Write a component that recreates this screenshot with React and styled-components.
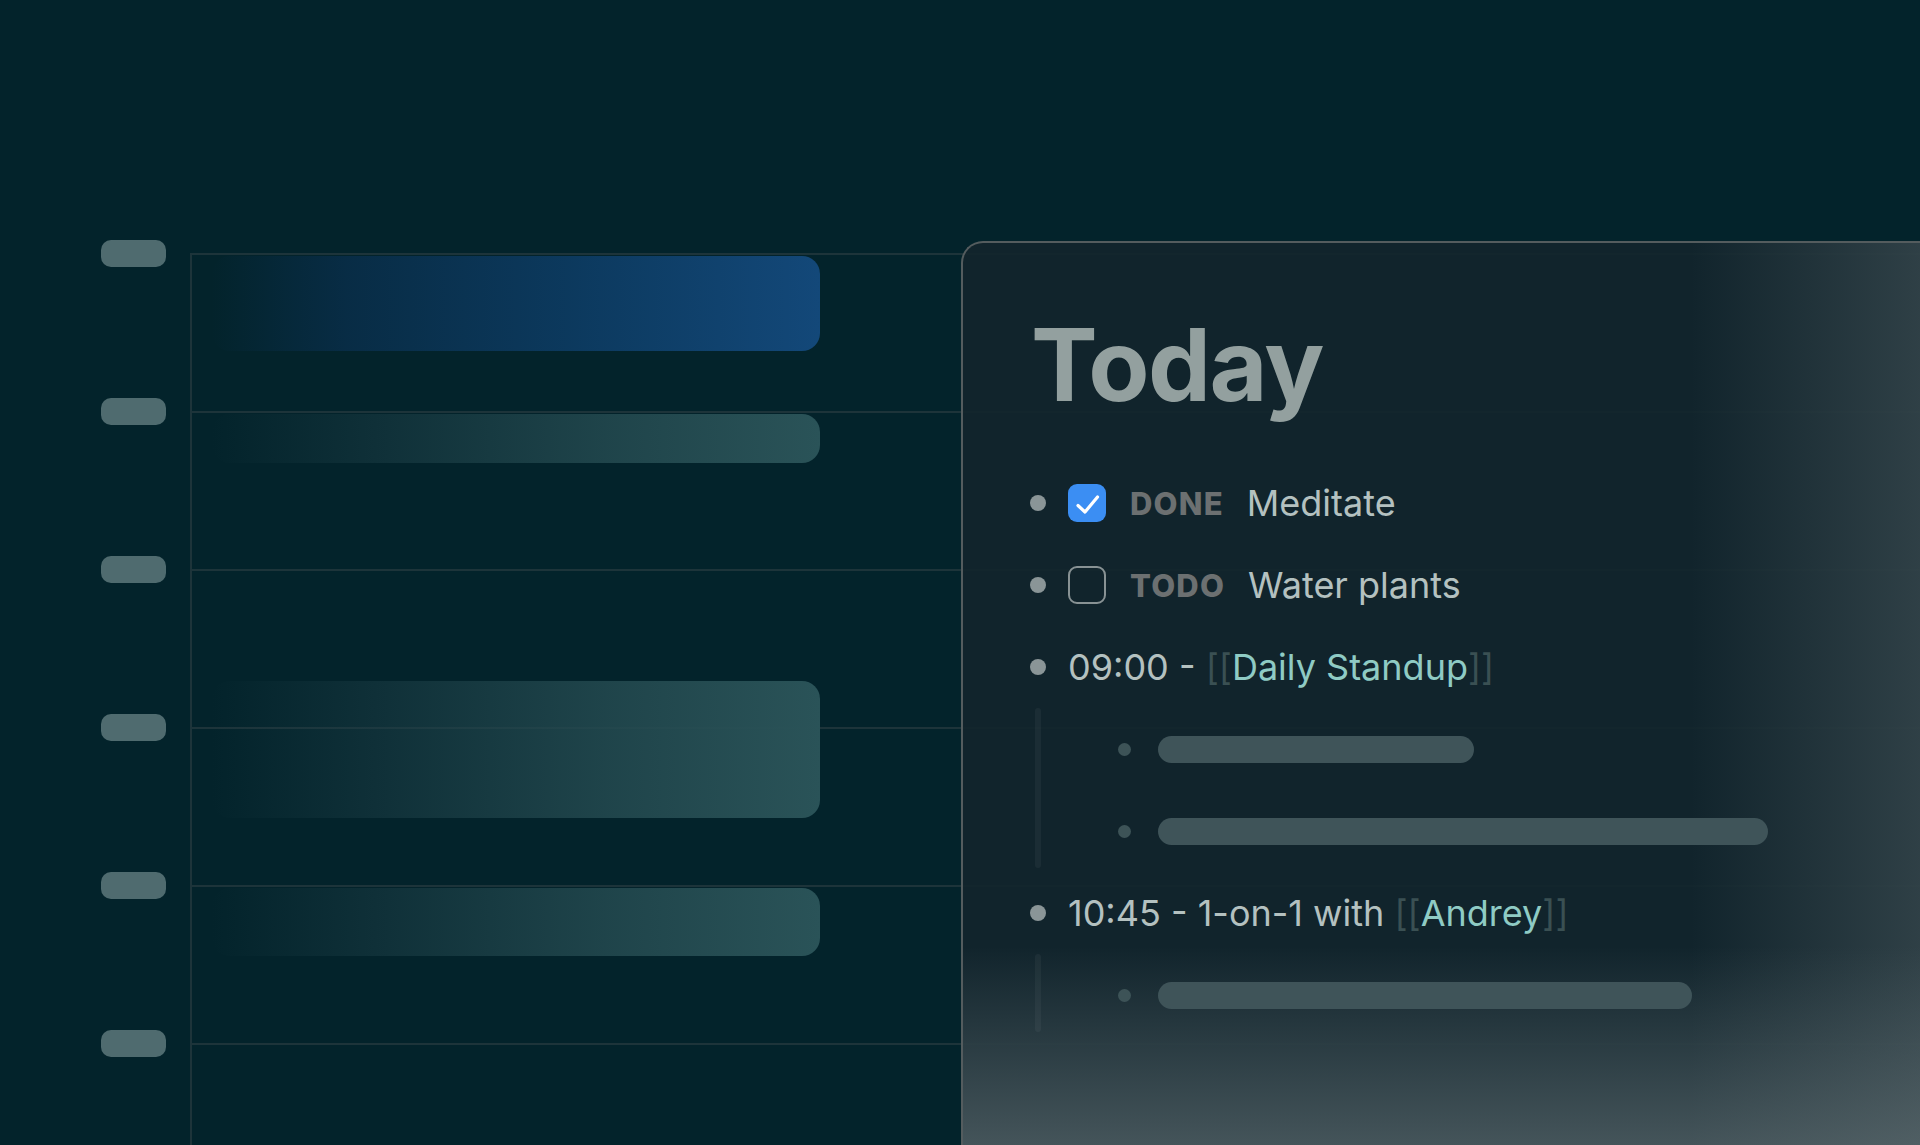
import React from 'react'
import styled, { createGlobalStyle } from 'styled-components'

const GlobalStyle = createGlobalStyle`
  html, body {
    margin: 0;
    padding: 0;
    background: #03232b;
    overflow: hidden;
  }
  body {
    font-family: Inter, "Noto Sans", "Liberation Sans", sans-serif;
  }
`

const Stage = styled.div`
  display: grid;
  width: 1920px;
  height: 1145px;
  overflow: hidden;
  background: #03232b;
`

/* ---------- left timeline ---------- */

const Timeline = styled.div`
  grid-area: 1 / 1;
  display: grid;
  grid-template-columns: 190px 1fr;
  grid-template-rows: repeat(5, 158px) 1fr;
  padding-top: 253px;
`

const Slot = styled.div`
  grid-column: 2;
  grid-row: ${p => p.row};
  border-top: 2px solid #1d343a;
  border-left: 2px solid #1d343a;
`

const Pill = styled.div`
  grid-column: 1;
  grid-row: ${p => p.row};
  align-self: start;
  justify-self: start;
  margin-left: 101px;
  margin-top: -13px;
  width: 65px;
  height: 27px;
  border-radius: 10px;
  background: #4f6b6f;
`

const EventBar = styled.div`
  grid-column: 2;
  grid-row: ${p => p.rows};
  align-self: start;
  margin-left: 22px;
  margin-top: ${p => p.offset}px;
  width: 608px;
  height: ${p => p.h}px;
  border-radius: 18px;
  background: ${p => p.blue
    ? 'linear-gradient(90deg, rgba(18,70,120,0) 0%, rgba(10,48,80,0.7) 22%, rgba(13,60,100,0.9) 60%, #134879 100%)'
    : 'linear-gradient(90deg, rgba(42,82,88,0) 0%, rgba(28,62,70,0.5) 28%, rgba(36,74,80,0.85) 65%, #2a5358 100%)'};
`

/* ---------- right panel ---------- */

const Panel = styled.div`
  grid-area: 1 / 1;
  margin-left: 961px;
  margin-top: 241px;
  border-top: 2px solid #545c5e;
  border-left: 2px solid #545c5e;
  border-top-left-radius: 22px;
  padding: 72px 0 0 0;
  background:
    linear-gradient(180deg, rgba(20, 38, 45, 0) 78%, rgba(100, 114, 118, 0.62) 100%),
    linear-gradient(90deg, rgba(20, 38, 45, 0) 76%, rgba(88, 102, 106, 0.42) 100%),
    rgba(19, 37, 44, 0.9);
`

const Title = styled.h1`
  margin: 0 0 47px 68px;
  font-family: Inter, "Liberation Sans", sans-serif;
  font-weight: 700;
  font-size: 100px;
  line-height: 100px;
  letter-spacing: -1.6px;
  color: #93a09f;
`

const Row = styled.div`
  display: flex;
  align-items: center;
  height: 82px;
  padding-left: 67px;
`

const Bullet = styled.span`
  flex: none;
  width: 16px;
  height: 16px;
  border-radius: 50%;
  background: #8a9597;
  margin-right: 22px;
`

const Checkbox = styled.span`
  flex: none;
  display: flex;
  align-items: center;
  justify-content: center;
  width: 38px;
  height: 38px;
  box-sizing: border-box;
  border-radius: 9px;
  background: ${p => p.checked ? '#3b8ef3' : 'transparent'};
  border: ${p => p.checked ? 'none' : '2.5px solid #889294'};
  margin-right: 24px;
`

const Marker = styled.span`
  font-weight: 800;
  font-size: 31px;
  letter-spacing: 1.2px;
  color: #6c7071;
  margin-right: 23px;
`

const Text = styled.span`
  font-size: 36px;
  letter-spacing: 0;
  color: ${p => p.tone === 'link' ? '#8fcbc4' : p.tone === 'bracket' ? '#3a5053' : '#b4c1c0'};
  white-space: pre;
`

const Children = styled.div`
  display: flex;
  padding-left: 72px;
`

const Guide = styled.div`
  flex: none;
  width: 6px;
  margin-bottom: 4px;
  border-radius: 3px;
  background: rgba(255, 255, 255, 0.045);
`

const ChildList = styled.div`
  display: flex;
  flex-direction: column;
`

const ChildRow = styled.div`
  display: flex;
  align-items: center;
  height: 82px;
  padding-left: 77px;
`

const SmallBullet = styled.span`
  flex: none;
  width: 13px;
  height: 13px;
  border-radius: 50%;
  background: #3d5357;
  margin-right: 27px;
`

const Placeholder = styled.span`
  height: 27px;
  width: ${p => p.w}px;
  border-radius: 14px;
  background: #3f5459;
`

const CheckIcon = () => (
  <svg width="38" height="38" viewBox="0 0 38 38" fill="none">
    <path d="M10 21.5 L17 28 L29.5 13" stroke="#fff" strokeWidth="3.2" strokeLinecap="round" strokeLinejoin="round" />
  </svg>
)

const Link = ({ children }) => (
  <>
    <Text tone="bracket">[[</Text>
    <Text tone="link">{children}</Text>
    <Text tone="bracket">]]</Text>
  </>
)

const pills = [1, 2, 3, 4, 5, 6]

export default function App() {
  return (
    <Stage>
      <GlobalStyle />
      <Timeline>
        {pills.map(r => <Slot key={'s' + r} row={r} />)}
        {pills.map(r => <Pill key={'p' + r} row={r} />)}
        <EventBar blue rows="1" offset={3} h={95} />
        <EventBar rows="2" offset={3} h={49} />
        <EventBar rows="3 / 5" offset={112} h={137} />
        <EventBar rows="5" offset={3} h={68} />
      </Timeline>

      <Panel>
        <Title>Today</Title>
        <Row>
          <Bullet />
          <Checkbox checked><CheckIcon /></Checkbox>
          <Marker>DONE</Marker>
          <Text>Meditate</Text>
        </Row>
        <Row>
          <Bullet />
          <Checkbox />
          <Marker>TODO</Marker>
          <Text>Water plants</Text>
        </Row>
        <Row>
          <Bullet />
          <Text>09:00 - </Text>
          <Link>Daily Standup</Link>
        </Row>
        <Children>
          <Guide />
          <ChildList>
            <ChildRow><SmallBullet /><Placeholder w={316} /></ChildRow>
            <ChildRow><SmallBullet /><Placeholder w={610} /></ChildRow>
          </ChildList>
        </Children>
        <Row>
          <Bullet />
          <Text>10:45 - 1-on-1 with </Text>
          <Link>Andrey</Link>
        </Row>
        <Children>
          <Guide />
          <ChildList>
            <ChildRow><SmallBullet /><Placeholder w={534} /></ChildRow>
          </ChildList>
        </Children>
      </Panel>
    </Stage>
  )
}
